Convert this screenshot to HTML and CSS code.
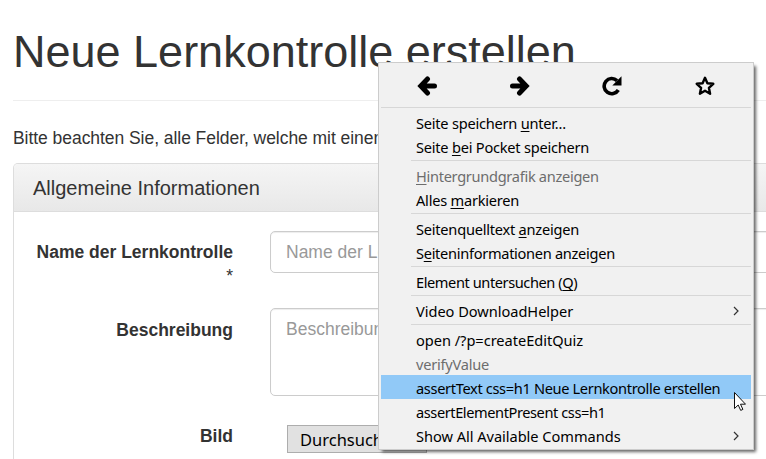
FILE: index.html
```html
<!DOCTYPE html>
<html lang="de">
<head>
<meta charset="utf-8">
<title>Neue Lernkontrolle erstellen</title>
<link rel="stylesheet" href="styles.css">
</head>
<body>
<main class="page">
  <h1>Neue Lernkontrolle erstellen</h1>
  <p class="hint">Bitte beachten Sie, alle Felder, welche mit einem</p>
  <section class="panel">
    <h2>Allgemeine Informationen</h2>
    <div class="form">
      <div class="row name-row"><div class="label"><b>Name der Lernkontrolle</b><br>*</div><div class="field">Name der Le</div></div>
      <div class="row desc-row"><div class="label"><b>Beschreibung</b></div><div class="field area">Beschreibung</div></div>
      <div class="row file-row"><div class="label"><b>Bild</b></div><div class="file">Durchsuchen</div></div>
    </div>
  </section>
</main>
<nav class="menu">
  <div class="tools">
    <svg viewBox="0 0 20 20"><path d="M10.500 3 3.800 10l6.700 7M4 10H17.500" fill="none" stroke="#000" stroke-width="5" stroke-linecap="round" stroke-linejoin="miter"/></svg>
    <svg viewBox="0 0 20 20"><path d="M9.500 3 16.200 10l-6.700 7M16 10H2.500" fill="none" stroke="#000" stroke-width="5" stroke-linecap="round" stroke-linejoin="miter"/></svg>
    <svg viewBox="0 0 20 20"><path d="M16.300 14A7.600 7.600 0 1 1 15 4.600" fill="none" stroke="#000" stroke-width="3.600"/><path d="M19.500 .3V9.500H10.300z"/></svg>
    <svg viewBox="0 0 20 20"><path d="m10 1.800 2.400 5.400 5.900.6-4.400 4 1.200 5.900L10 14.700l-5.100 3 1.200-5.900-4.400-4 5.900-.6z" fill="none" stroke="#000" stroke-width="2.400" stroke-linejoin="round"/></svg>
  </div>
  <div class="item"><span>Seite speichern <u>u</u>nter...</span></div>
  <div class="item"><span>Seite <u>b</u>ei Pocket speichern</span></div>
  <hr>
  <div class="item off tight"><span><u>H</u>intergrundgrafik anzeigen</span></div>
  <div class="item"><span>Alles <u>m</u>arkieren</span></div>
  <hr>
  <div class="item"><span>Seitenquelltext <u>a</u>nzeigen</span></div>
  <div class="item tight"><span>S<u>e</u>iteninformationen anzeigen</span></div>
  <hr>
  <div class="item tighter"><span>Element untersuchen (<u>Q</u>)</span></div>
  <hr>
  <div class="item wide"><span>Video DownloadHelper</span><svg class="chev" viewBox="0 0 6 10"><path d="m1 1 4 4-4 4"/></svg></div>
  <hr>
  <div class="item wide"><span>open /?p=createEditQuiz</span></div>
  <div class="item off"><span>verifyValue</span></div>
  <div class="item hot snug"><span>assertText css=h1 Neue Lernkontrolle erstellen</span></div>
  <div class="item tighter"><span>assertElementPresent css=h1</span></div>
  <div class="item wide"><span>Show All Available Commands</span><svg class="chev" viewBox="0 0 6 10"><path d="m1 1 4 4-4 4"/></svg></div>
</nav>
<svg class="cursor" viewBox="0 0 12 19"><path d="M.5.5v16l3.700-3.500 2.500 5.400 2.200-1-2.400-5.200h5z" fill="#fff" stroke="#111" stroke-width="1"/></svg>
</body>
</html>
```
FILE: styles.css
```css
* { box-sizing: border-box; }
body {
  margin: 0;
  width: 766px;
  height: 459px;
  overflow: hidden;
  background: #fff;
  color: #333;
  font: 17.5px/24px "Liberation Sans", Arial, sans-serif;
}
.page { padding: 26px 0 0 13px; width: 766px; height: 459px; overflow: hidden; }
h1 {
  margin: 0;
  height: 75px;
  padding-top: 1px;
  border-bottom: 1px solid #eee;
  font-size: 45px;
  font-weight: 400;
  line-height: 50px;
  white-space: nowrap;
}
.hint { margin: 25px 0 13px; letter-spacing: -.05px; white-space: nowrap; }
.panel {
  width: 800px;
  height: 296px;
  border: 1px solid #ddd;
  border-bottom: 0;
  border-radius: 5px 5px 0 0;
}
h2 {
  margin: 0;
  height: 48px;
  padding-left: 19px;
  border-bottom: 1px solid #ddd;
  border-radius: 4px 4px 0 0;
  background: linear-gradient(#f5f5f5, #e8e8e8);
  font-size: 20px;
  font-weight: 400;
  line-height: 48px;
}
.form { padding-top: 19px; }
.row { display: flex; }
.name-row { height: 77px; }
.desc-row { height: 117px; }
.label { flex: none; width: 219px; padding-top: 9px; text-align: right; white-space: nowrap; }
.desc-row .label { padding-top: 10px; }
.file-row .label { padding-top: 0; margin-top: -1px; }
.field {
  flex: none;
  width: 540px;
  height: 42px;
  margin-left: 37px;
  padding: 8px 15px;
  border: 1px solid #ccc;
  border-radius: 5px;
  box-shadow: inset 0 1px 1px rgba(0, 0, 0, .075);
  color: #999;
}
.area { height: 88px; }
.file {
  width: 140px;
  height: 28px;
  margin-left: 54px;
  padding-left: 12px;
  border: 1px solid #adadad;
  background: #e1e1e1;
  color: #000;
  font: 16.5px/27px "Noto Sans", sans-serif;
}
.menu {
  position: absolute;
  left: 378px;
  top: 62px;
  width: 376px;
  height: 388px;
  padding: 2px;
  border: 1px solid #ccc;
  background: #f1f1f1;
  box-shadow: 3px 3px 3px -1px rgba(0, 0, 0, .6);
  color: #000;
  font: 14.6px/24px "Noto Sans", sans-serif;
  letter-spacing: -.23px;
}
.tools {
  display: flex;
  justify-content: space-around;
  align-items: center;
  height: 43px;
  margin-bottom: 2px;
  border-bottom: 1px solid #d7d7d7;
}
.tools svg { width: 20px; height: 20px; }
.item {
  display: flex;
  justify-content: space-between;
  height: 24px;
  padding: 1px 12px 0 35px;
  white-space: nowrap;
}
.tight { letter-spacing: -.3px; }
.snug { letter-spacing: -.34px; }
.tighter { letter-spacing: -.42px; }
.wide { letter-spacing: -.03px; }
.off { color: #6d6d6d; }
.hot { background: #91c9f7; }
.menu hr {
  height: 1px;
  margin: 2px 0 2px 30px;
  border: 0;
  background: #d7d7d7;
}
u { text-underline-offset: 2px; text-decoration-thickness: 1px; text-decoration-skip-ink: none; }
.chev { width: 6px; height: 10px; margin-top: 7px; fill: none; stroke: #333; stroke-width: 1.2; }
.cursor { position: absolute; left: 734px; top: 392px; width: 12px; height: 19px; }
```
